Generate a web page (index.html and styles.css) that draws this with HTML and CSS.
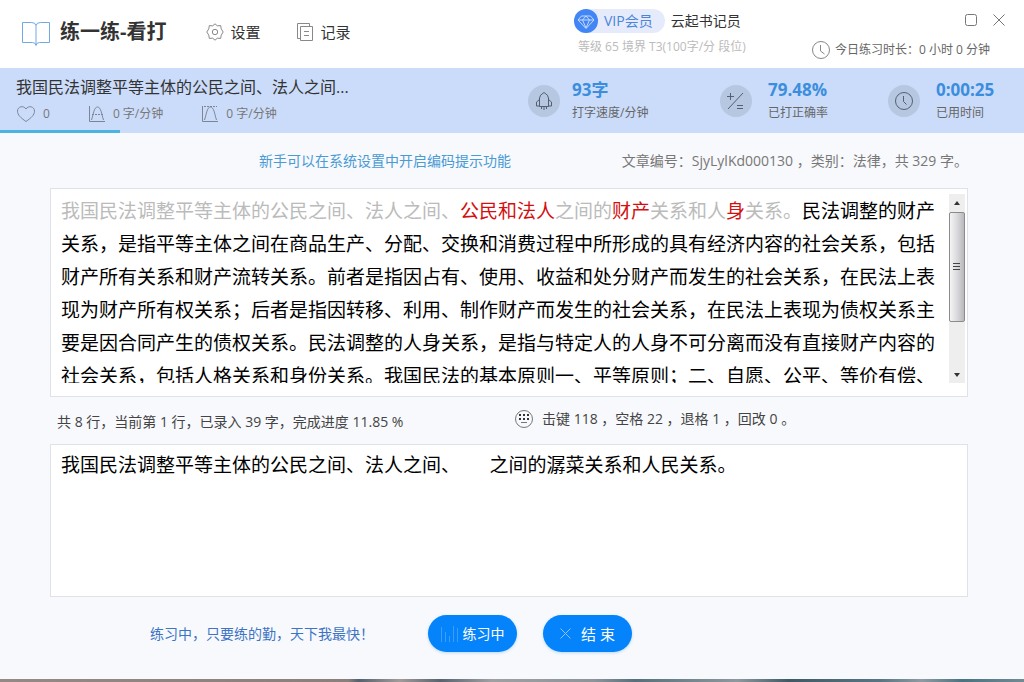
FILE: index.html
```html
<!DOCTYPE html>
<html lang="zh-CN">
<head>
<meta charset="utf-8">
<meta name="viewport" content="width=device-width, initial-scale=1">
<title>练一练-看打</title>
<link rel="stylesheet" href="styles.css">
</head>
<body>
<header class="topbar">
  <div class="brand-area">
    <svg class="logo" width="30" height="28" viewBox="0 0 30 28"><path d="M1.500 2.500h9q4 0 4.500 3q.5-3 4.500-3h9v20h-10q-3 0-3.500 3q-.5-3-3.500-3h-10zM15 5.500v19"/></svg>
    <h1 class="title">练一练-看打</h1>
    <button class="nav nav-settings" type="button">
      <svg class="line-icon" width="18" height="18" viewBox="0 0 18 18"><path d="M9 .8l2.300 2 3.400-.2.500 3.200 2 3.200-2 3.200-.5 3.200-3.400-.2L9 17.200l-2.300-2-3.400.2-.5-3.200-2-3.200 2-3.200.5-3.200 3.400.2z"/><circle cx="9" cy="9" r="2.700"/></svg>
      设置
    </button>
    <button class="nav" type="button">
      <svg class="line-icon" width="18" height="20" viewBox="0 0 18 20"><path d="M4 16.500H1.500v-15h12V4M4.500 4.500h12v14h-12zM8 9.500h5M8 13.500h5"/></svg>
      记录
    </button>
  </div>
  <div class="member">
    <div class="member-row">
      <span class="vip"><svg class="vip-icon" width="24" height="24" viewBox="0 0 24 24"><circle cx="12" cy="12" r="12"/><path d="M7.500 7h9l3.500 4-8 8.500L4 11zM4 11h16M8.500 11l3.500 8 3.500-8M8.500 11L12 7l3.500 4"/></svg>VIP会员</span>
      <span class="user">云起书记员</span>
    </div>
    <p class="level">等级 65 境界 T3(100字/分 段位)</p>
  </div>
  <div class="window-area">
    <div class="window-buttons">
      <button class="win" type="button" aria-label="最大化"><svg width="14" height="14" viewBox="0 0 14 14"><rect x="1.500" y="1.500" width="11" height="11" rx="2"/></svg></button>
      <button class="win" type="button" aria-label="关闭"><svg width="14" height="14" viewBox="0 0 14 14"><path d="M1.500 1.500l11 11M12.500 1.500l-11 11"/></svg></button>
    </div>
    <p class="today"><svg class="line-icon" width="20" height="20" viewBox="0 0 20 20"><circle cx="10" cy="10" r="8.500"/><path d="M9.500 5v6l4 3"/></svg>今日练习时长：0 小时 0 分钟</p>
  </div>
</header>

<section class="band">
  <div class="article">
    <h2 class="article-title">我国民法调整平等主体的公民之间、法人之间...</h2>
    <div class="article-meta">
      <span class="meta"><svg class="meta-icon" width="20" height="18" viewBox="0 0 20 18"><path d="M10 16.500C5 13 1.500 10 1.500 6.200 1.500 1.500 7.500 0 10 4c2.500-4 8.500-2.500 8.500 2.200C18.500 10 15 13 10 16.500z"/></svg>0</span>
      <span class="meta"><svg class="meta-icon" width="18" height="18" viewBox="0 0 18 18"><path d="M1.500 1v15.500H17M3.500 15C5.500 9 6 2 9.500 2S13.500 9 15.500 15"/><path stroke-dasharray="2 1" d="M4 9.500h12"/></svg>0 字/分钟</span>
      <span class="meta"><svg class="meta-icon" width="18" height="18" viewBox="0 0 18 18"><path d="M1.500 1v15.500H17M3.500 15C5.500 9 6 2 9.500 2S13.500 9 15.500 15"/><path stroke-dasharray="2 1" d="M3 1.500h13"/></svg>0 字/分钟</span>
    </div>
  </div>
  <div class="stat">
    <svg class="stat-icon" width="32" height="32" viewBox="0 0 32 32"><circle class="disc" cx="16" cy="16" r="16"/><path d="M11.500 21.500V13q0-3 4.500-5.500 4.500 2.500 4.500 5.500v8.500zM11.500 14.500L8.500 17v4h3M20.500 14.500l3 2.500v4h-3M13.500 22v2M16 22v3M18.500 22v2"/></svg>
    <div><strong class="value">93字</strong><p class="label">打字速度/分钟</p></div>
  </div>
  <div class="stat stat-wide">
    <svg class="stat-icon" width="32" height="32" viewBox="0 0 32 32"><circle class="disc" cx="16" cy="16" r="16"/><path d="M23 8L8 24M7 11.500h7M10.500 8v7M17 20.500h6M17 23.500h6"/></svg>
    <div><strong class="value">79.48%</strong><p class="label">已打正确率</p></div>
  </div>
  <div class="stat stat-wide">
    <svg class="stat-icon" width="32" height="32" viewBox="0 0 32 32"><circle class="disc" cx="16" cy="16" r="16"/><circle cx="16" cy="16" r="8.500"/><path d="M15.500 11v5.500l3 3"/></svg>
    <div><strong class="value">0:00:25</strong><p class="label">已用时间</p></div>
  </div>
  <div class="progress"><div class="progress-fill"></div></div>
</section>

<main class="content">
  <div class="info">
    <p class="tip">新手可以在系统设置中开启编码提示功能</p>
    <p class="source">文章编号：SjyLylKd000130 ，类别：法律，共 329 字。</p>
  </div>
  <section class="panel">
    <div class="passage"><span class="done">我国民法调整平等主体的公民之间、法人之间、<span class="wrong">公民和法人</span>之间的<span class="wrong">财产</span>关系和人<span class="wrong">身</span>关系。</span>民法调整的财产关系，是指平等主体之间在商品生产、分配、交换和消费过程中所形成的具有经济内容的社会关系，包括财产所有关系和财产流转关系。前者是指因占有、使用、收益和处分财产而发生的社会关系，在民法上表现为财产所有权关系；后者是指因转移、利用、制作财产而发生的社会关系，在民法上表现为债权关系主要是因合同产生的债权关系。民法调整的人身关系，是指与特定人的人身不可分离而没有直接财产内容的社会关系，包括人格关系和身份关系。我国民法的基本原则一、平等原则；二、自愿、公平、等价有偿、</div>
    <div class="scrollbar">
      <svg class="arrow" width="16" height="16" viewBox="0 0 16 16"><path d="M5 11l3-4 3 4z"/></svg>
      <div class="thumb"><svg width="8" height="10" viewBox="0 0 8 10"><path d="M0 1.500h7M0 4.500h7M0 7.500h7"/></svg></div>
      <svg class="arrow" width="16" height="16" viewBox="0 0 16 16"><path d="M5 6l3 4 3-4z"/></svg>
    </div>
  </section>
  <div class="status">
    <p class="lines">共 8 行，当前第 1 行，已录入 39 字，完成进度 11.85 %</p>
    <p class="keys"><svg width="20" height="20" viewBox="0 0 20 20"><circle class="ring" cx="10" cy="10" r="8.500"/><path class="dots" d="M5 5h2v2H5zM9 5h2v2H9zM13 5h2v2h-2zM5 9h2v2H5zM9 9h2v2H9zM13 9h2v2h-2z"/><path class="ring" d="M7 13.500h6"/></svg>击键 118 ，空格 22 ，退格 1 ，回改 0 。</p>
  </div>
  <textarea class="typing" aria-label="录入区" spellcheck="false">我国民法调整平等主体的公民之间、法人之间、      之间的潺菜关系和人民关系。</textarea>
</main>

<footer class="actions">
  <p class="cheer">练习中，只要练的勤，天下我最快！</p>
  <button class="pill" type="button"><svg class="bars" width="18" height="18" viewBox="0 0 18 18"><path d="M.5 2v15M4.500 7v10M8.500 11v6M12.500 1v16M16.500 3v14"/></svg>练习中</button>
  <button class="pill pill-end" type="button"><svg class="cross" width="11" height="11" viewBox="0 0 11 11"><path d="M.5.500l10 10M10.500.500l-10 10"/></svg>结 束</button>
</footer>
<div class="desktop-edge"></div>
</body>
</html>
```

FILE: styles.css
```css
* { box-sizing: border-box; }
body {
  margin: 0;
  min-height: 100vh;
  display: flex;
  flex-direction: column;
  background: #f7f9fc;
  color: #444;
  font: 14px/20px "Open Sans", "Noto Sans CJK SC", sans-serif;
}
h1, h2, p { margin: 0; }
svg { flex: none; fill: none; stroke: currentColor; }
button { font: inherit; color: inherit; border: 0; background: none; padding: 0; cursor: pointer; }

.topbar {
  display: grid;
  grid-template-columns: 574fr 220fr 230fr;
  min-height: 68px;
  background: #fff;
}
.brand-area { display: flex; align-items: center; padding: 0 0 4px 21px; }
.logo { color: #72a9e3; margin-top: 4px; }
.title { margin-left: 9px; font-size: 20px; line-height: 28px; color: #333; white-space: nowrap; }
.nav { display: flex; align-items: center; gap: 6px; font-size: 15px; color: #333; white-space: nowrap; }
.nav-settings { margin: 0 36px 0 40px; }
.line-icon { color: #888; }
.member { padding-top: 9px; white-space: nowrap; }
.member-row { display: flex; align-items: center; gap: 6px; }
.vip {
  display: flex;
  align-items: center;
  gap: 6px;
  height: 24px;
  padding-right: 12px;
  border-radius: 12px;
  background: #e6ebfc;
  color: #4a86d8;
  font-size: 14px;
}
.vip-icon circle { fill: #4285f4; stroke: none; }
.vip-icon path { stroke: #c5dafc; }
.user { color: #333; }
.level { margin: 4px 0 0 4px; font-size: 12px; color: #bbb; }
.window-area { padding: 13px 18px 0 0; }
.window-buttons { display: flex; justify-content: flex-end; gap: 14px; }
.win { display: flex; color: #777; }
.today {
  display: flex;
  align-items: center;
  justify-content: flex-end;
  gap: 4px;
  margin: 13px 16px 0 0;
  font-size: 12px;
  color: #666;
  white-space: nowrap;
}

.band {
  display: grid;
  grid-template-columns: 528fr 192fr 168fr 136fr;
  background: #cbdcfa;
}
.article { padding: 7px 0 6px 16px; white-space: nowrap; }
.article-title { font-size: 16px; line-height: 24px; font-weight: 400; color: #333; }
.article-meta { display: flex; gap: 38px; margin-top: 5px; color: #777; font-size: 12px; }
.meta { display: flex; align-items: center; gap: 7px; }
.meta-icon { color: #7b8596; }
.stat { display: flex; align-items: center; gap: 12px; padding-top: 4px; white-space: nowrap; }
.stat-wide { gap: 16px; }
.stat-icon { color: #555f6e; }
.stat-icon .disc { fill: #b6c7e2; stroke: none; }
.value { display: block; font-size: 17px; line-height: 22px; color: #3b8ede; }
.label { margin-top: 2px; font-size: 12px; line-height: 20px; color: #666; }
.progress { grid-column: 1 / -1; height: 3px; }
.progress-fill { width: 120px; height: 3px; background: #4cb4e2; }

.content { padding: 0 56px 0 50px; }
.info { display: flex; justify-content: space-between; padding: 18px 0 17px 209px; white-space: nowrap; }
.tip { color: #4a9ad4; }
.source { color: #777; }
.panel {
  display: flex;
  justify-content: space-between;
  padding: 5px 2px 13px 10px;
  border: 1px solid #dfe3e8;
  background: #fff;
}
.passage {
  flex: 1;
  height: 189px;
  padding-top: 1px;
  margin-right: 6px;
  overflow: hidden;
  font-size: 19px;
  line-height: 33px;
  color: #000;
}
.done { color: #bbb; }
.wrong { color: #d40f0f; }
.scrollbar { display: flex; flex-direction: column; width: 16px; background: #eee; }
.arrow path { fill: #333; stroke: none; }
.arrow:last-child { margin-top: auto; }
.thumb {
  display: flex;
  align-items: center;
  justify-content: center;
  height: 110px;
  margin-top: 2px;
  border: 1px solid #8b8b8b;
  border-radius: 2px;
  background: linear-gradient(90deg, #f5f5f5, #dadadd 50%, #b9b9be);
  color: #444;
}
.status { display: grid; grid-template-columns: 464fr 454fr; padding: 12px 0; white-space: nowrap; }
.lines { padding: 3px 0 0 7px; }
.keys { display: flex; align-items: center; gap: 8px; height: 20px; }
.ring { stroke: #777; }
.dots { fill: #333; stroke: none; }
.typing {
  display: block;
  width: 100%;
  height: 153px;
  padding: 4px 10px;
  border: 1px solid #dfe3e8;
  outline: 0;
  resize: none;
  background: #fff;
  color: #000;
  font: 19px/33px "Open Sans", "Noto Sans CJK SC", sans-serif;
}

.actions { display: flex; align-items: center; padding: 18px 0 0 150px; white-space: nowrap; }
.cheer { width: 278px; color: #3d74c4; }
.pill {
  display: flex;
  align-items: center;
  justify-content: center;
  gap: 4px;
  width: 89px;
  height: 37px;
  border-radius: 19px;
  background: #0583fb;
  color: #fff;
  box-shadow: 0 1px 3px #b9d8f5;
}
.pill-end { margin-left: 26px; gap: 10px; font-size: 15px; }
.bars { color: #3d9dfb; }
.cross { color: #8cc5ff; }
.desktop-edge {
  height: 3px;
  margin-top: auto;
  background: linear-gradient(90deg, #968984 0, #8c7f7b 34%, #55616c 35%, #a39b9a 39%, #59636e 43%, #a0a0a2 48%, #8d949a 58%, #56707b 62%, #8d999e 72%, #3f5a66 77%, #577684 86%, #8f9ba2 90%, #4a7281 94%, #718b94);
}
```
